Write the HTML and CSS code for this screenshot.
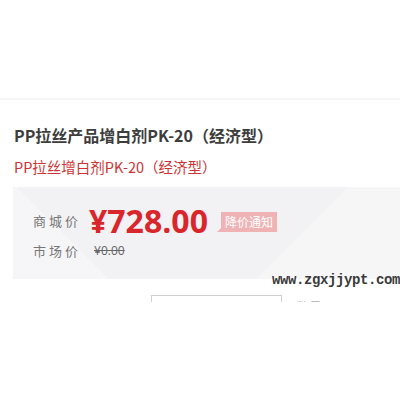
FILE: index.html
```html
<!DOCTYPE html>
<html lang="zh-CN">
<head>
    <meta charset="UTF-8">
    <meta name="viewport" content="width=device-width, initial-scale=1.0">
    <title>PP拉丝产品增白剂PK-20（经济型）</title>
    <link rel="stylesheet" href="styles.css">
</head>
<body>
    <div class="topbar"></div>

    <div class="product">
        <h1 class="title">PP拉丝产品增白剂PK-20（经济型）</h1>
        <p class="subtitle">PP拉丝增白剂PK-20（经济型）</p>

        <div class="price-box">
            <div class="price-row">
                <span class="label">商城价</span>
                <span class="price">¥728.00</span>
                <span class="notice">降价通知</span>
            </div>
            <div class="price-row market">
                <span class="label">市场价</span>
                <span class="old-price">¥0.00</span>
            </div>
            <span class="watermark">www.zgxjjypt.com</span>
        </div>

        <div class="buy">
            <div class="qty-box"></div>
            <span class="qty-label">数量</span>
        </div>
    </div>
</body>
</html>
```

FILE: styles.css
```css
body {
    margin: 0;
    background-color: #fff;
    font-family: "Noto Sans CJK SC", "Noto Sans", sans-serif;
}

.topbar {
    height: 98px;
    border-bottom: 2px solid #f5f5f5;
}

.product {
    padding-left: 13px;
}

.title {
    margin: 23px 0 0 1px;
    font-size: 16px;
    line-height: 24px;
    font-weight: bold;
    color: #3d3d3d;
}

.subtitle {
    margin: 10px 0 0 1px;
    font-size: 14.5px;
    line-height: 20px;
    color: #cc3333;
}

.price-box {
    position: relative;
    margin-top: 10px;
    height: 92px;
    padding: 16px 0 0 20px;
    box-sizing: border-box;
    background-color: #f2f1f3;
    background-image:
        linear-gradient(135deg, transparent 70%, rgba(255, 255, 255, 0.35) 70%),
        linear-gradient(225deg, transparent 80%, rgba(255, 255, 255, 0.3) 80%);
}

.price-row {
    display: flex;
    align-items: center;
    height: 34px;
}

.price-row.market {
    height: 26px;
}

.label {
    font-size: 13px;
    letter-spacing: 3px;
    color: #777;
}

.price {
    margin-left: 8px;
    font-family: "Open Sans", "Noto Sans CJK SC", sans-serif;
    font-size: 32px;
    font-weight: bold;
    color: #d9262c;
}

.notice {
    position: relative;
    margin: 4px 0 0 13px;
    padding: 0 4px;
    height: 20px;
    line-height: 20px;
    font-size: 12px;
    color: #fff;
    background-color: #efb3b5;
}

.notice::before {
    content: "";
    position: absolute;
    left: -4px;
    bottom: 0;
    border-bottom: 4px solid #efb3b5;
    border-left: 4px solid transparent;
}

.old-price {
    margin-left: 13px;
    font-family: "Open Sans", "Noto Sans CJK SC", sans-serif;
    font-size: 12px;
    color: #666;
    text-decoration: line-through;
}

.watermark {
    position: absolute;
    right: 0;
    bottom: -9px;
    font-family: "Liberation Mono", monospace;
    font-size: 14px;
    letter-spacing: -0.4px;
    line-height: 16px;
    font-weight: bold;
    color: #3a3a3a;
}

.buy {
    display: flex;
    height: 7px;
    margin-top: 16px;
    padding-left: 138px;
    overflow: hidden;
}

.qty-box {
    width: 129px;
    height: 30px;
    border: 1px solid #cfcfcf;
    flex-shrink: 0;
}

.qty-label {
    margin: 2px 0 0 14px;
    font-size: 13px;
    color: #888;
}
```
